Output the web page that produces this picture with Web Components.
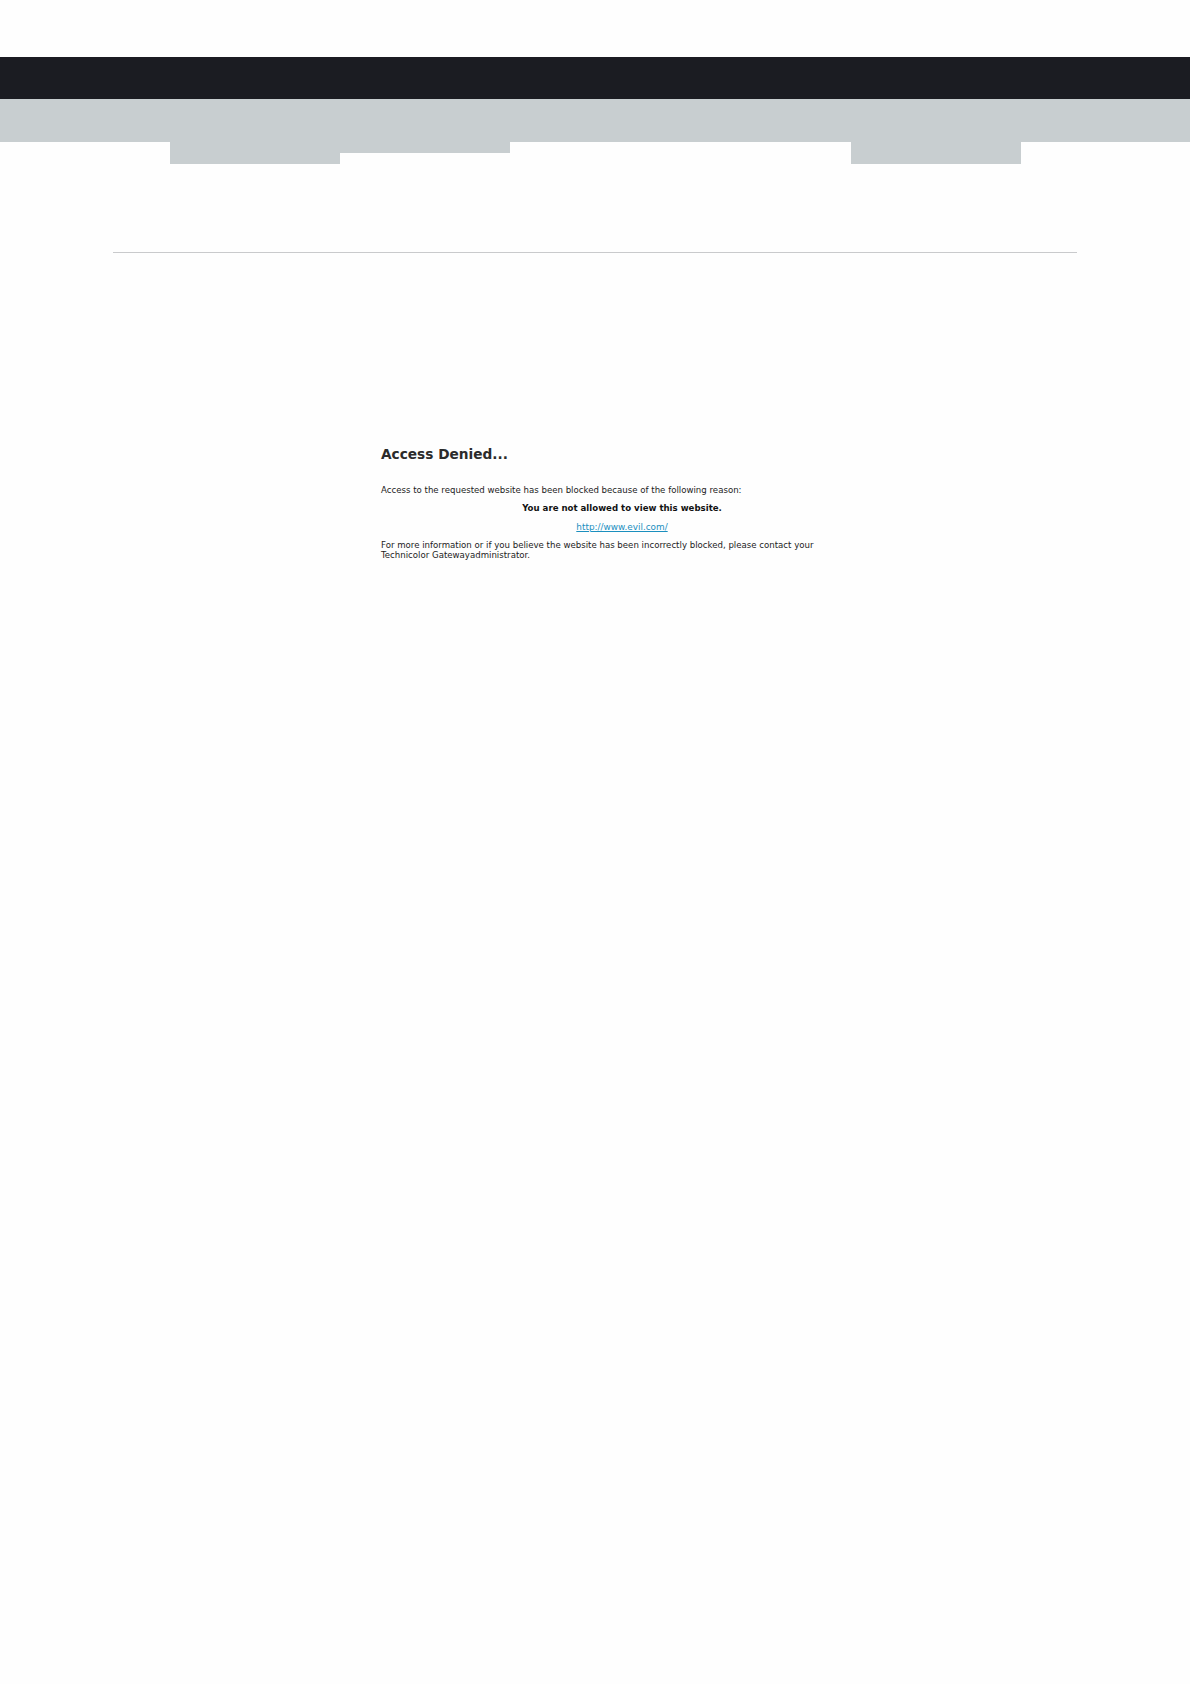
<!DOCTYPE html>
<html lang="en">
<head>
<meta charset="utf-8">
<title>Access Denied</title>
<style>
html,body{margin:0;background:#fefefe;}
body{font-family:"DejaVu Sans",sans-serif;height:1684px;overflow:hidden;}
</style>
</head>
<body>
<gw-header></gw-header>
<gw-rule></gw-rule>
<gw-denied>
  <span slot="title">Access Denied...</span>
  <span slot="intro">Access to the requested website has been blocked because of the following reason:</span>
  <span slot="reason">You are <b>not allowed</b> to view this website.</span>
  <a slot="url" href="#">http://www.evil.com/</a>
  <span slot="outro">For more information or if you believe the website has been incorrectly blocked, please contact your<br>Technicolor Gatewayadministrator.</span>
</gw-denied>
<script>
function def(name, html){
  customElements.define(name, class extends HTMLElement{
    constructor(){super();this.attachShadow({mode:'open'}).innerHTML=html;}
  });
}
def('gw-header',`<style>
:host{display:block;padding-top:57px}
.top{height:42px;background:#1b1c22}
.bar{height:43px;background:#c8ced0}
.tabs{display:grid;grid-template-columns:repeat(5,170.2px);margin-left:170px;align-items:start}
.tabs div{background:#c8ced0}
.l{height:22px}.m{height:11px}.n{height:0}
</style>
<div class="top"></div>
<div class="bar"></div>
<div class="tabs"><div class="l"></div><div class="m"></div><div class="n"></div><div class="n"></div><div class="l"></div></div>`);
def('gw-rule',`<style>
:host{display:block;height:1px;margin:88px 113px 0;background:#c9cacc}
</style>`);
def('gw-denied',`<style>
:host{display:block;width:482px;margin:192px 0 0 381px;color:#1c1c1c;font:8.6px/10px "DejaVu Sans",sans-serif}
h1{margin:0 0 22px;font:bold 13.7px/18px "DejaVu Sans",sans-serif;color:#2b2b2b}
p{margin:0}
.intro{margin-bottom:8.3px}
.reason{text-align:center;font-weight:bold;margin-bottom:8.3px;color:#111}
.url{text-align:center;margin-bottom:8.3px;font-size:8.9px}
::slotted(a){color:#1b8fbe;text-decoration:underline}
</style>
<h1><slot name="title"></slot></h1>
<p class="intro"><slot name="intro"></slot></p>
<p class="reason"><slot name="reason"></slot></p>
<p class="url"><slot name="url"></slot></p>
<p><slot name="outro"></slot></p>`);
</script>
</body>
</html>
